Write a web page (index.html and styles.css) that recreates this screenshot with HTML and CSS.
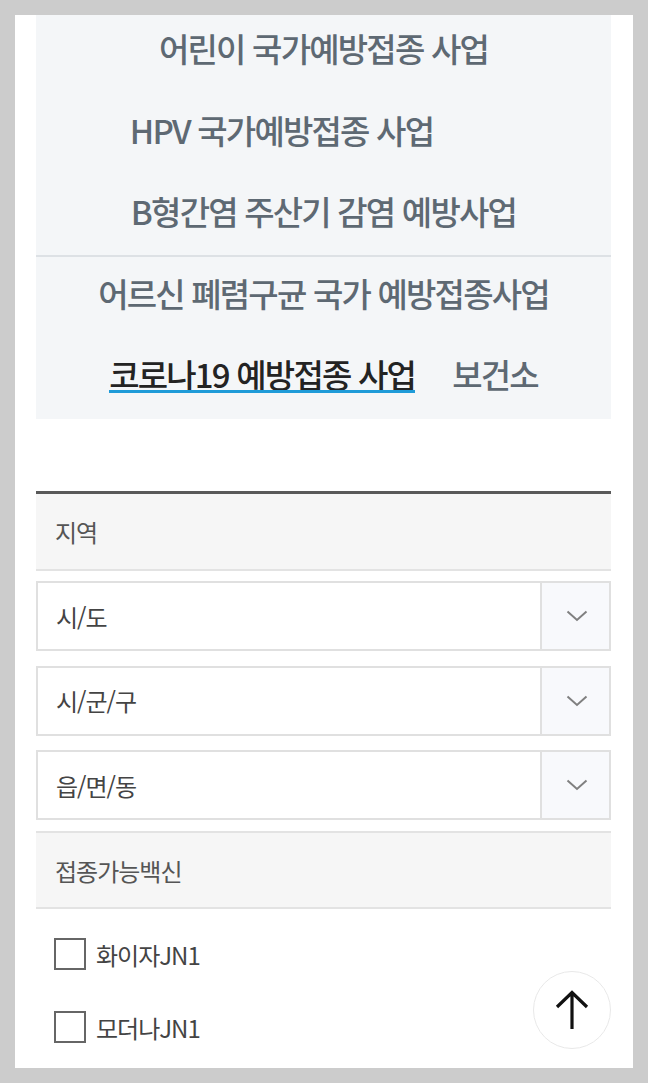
FILE: index.html
```html
<!DOCTYPE html>
<html lang="ko">
<head>
<meta charset="utf-8">
<title>예방접종 사업</title>
<link rel="stylesheet" href="styles.css">
</head>
<body>
<div class="page">
  <nav class="tabs">
    <ul class="tab-group">
      <li class="tab">어린이 국가예방접종 사업</li>
      <li class="tab tab-shift">HPV 국가예방접종 사업</li>
      <li class="tab">B형간염 주산기 감염 예방사업</li>
    </ul>
    <ul class="tab-group tab-group-second">
      <li class="tab">어르신 폐렴구균 국가 예방접종사업</li>
      <li class="tab tab-row">
        <span class="tab-active">코로나19 예방접종 사업</span>
        <span>보건소</span>
      </li>
    </ul>
  </nav>

  <section class="search">
    <div class="field-head field-head-first">지역</div>
    <div class="selects">
      <div class="select">
        <span class="select-label">시/도</span>
        <span class="select-btn"><svg width="22" height="12" viewBox="0 0 22 12"><path d="M1.5 1.5 L11 10 L20.5 1.5" fill="none" stroke="#808080" stroke-width="2"/></svg></span>
      </div>
      <div class="select">
        <span class="select-label">시/군/구</span>
        <span class="select-btn"><svg width="22" height="12" viewBox="0 0 22 12"><path d="M1.5 1.5 L11 10 L20.5 1.5" fill="none" stroke="#808080" stroke-width="2"/></svg></span>
      </div>
      <div class="select">
        <span class="select-label">읍/면/동</span>
        <span class="select-btn"><svg width="22" height="12" viewBox="0 0 22 12"><path d="M1.5 1.5 L11 10 L20.5 1.5" fill="none" stroke="#808080" stroke-width="2"/></svg></span>
      </div>
    </div>
    <div class="field-head field-head-second">접종가능백신</div>
    <ul class="checks">
      <li class="check"><span class="box"></span><span>화이자JN1</span></li>
      <li class="check"><span class="box"></span><span>모더나JN1</span></li>
      <li class="check"><span class="box"></span></li>
    </ul>
  </section>
</div>

<button class="to-top" type="button" aria-label="맨 위로">
  <svg width="40" height="42" viewBox="0 0 40 42"><path d="M20 40 V4 M5 18 L20 3.5 L35 18" fill="none" stroke="#111" stroke-width="3.2"/></svg>
</button>
<div class="frame"></div>
</body>
</html>
```

FILE: styles.css
```css
* { box-sizing: border-box; }
html, body { margin: 0; padding: 0; }
body {
  background: #fff;
  font-family: "Noto Sans CJK KR", "Noto Sans", sans-serif;
  overflow: hidden;
  height: 1083px;
}
ul { list-style: none; margin: 0; padding: 0; }

.page {
  padding: 15px 37px 0 36px;
}

.tabs {
  background: #f4f6f8;
}
.tab-group {
  display: flex;
  flex-direction: column;
  gap: 41.5px;
  padding: 13px 0 24px;
  border-bottom: 2px solid #dde1e5;
}
.tab-group-second {
  border-bottom: 0;
  padding: 16px 0 25px;
  gap: 41px;
}
.tab {
  height: 40px;
  line-height: 40px;
  text-align: center;
  font-size: 33px;
  font-weight: 500;
  letter-spacing: -1.8px;
  color: #5e6973;
  white-space: nowrap;
}
.tab-shift { padding-right: 84px; }
.tab-row {
  display: flex;
  justify-content: center;
  gap: 37px;
}
.tab-active {
  color: #232323;
  position: relative;
}
.tab-active::after {
  content: "";
  position: absolute;
  left: 0;
  right: 0;
  bottom: 1px;
  height: 3px;
  background: #1f9bd8;
}

.search {
  margin-top: 72px;
}
.field-head {
  background: #f6f6f6;
  border-bottom: 2px solid #e3e3e3;
  padding-left: 19px;
  display: flex;
  align-items: center;
  font-size: 24px;
  letter-spacing: -1px;
  color: #555;
}
.field-head-first {
  height: 80px;
  border-top: 3px solid #595959;
  margin-bottom: 10px;
}
.field-head-second {
  height: 78px;
  border-top: 2px solid #e3e3e3;
  margin-top: 11px;
}

.selects {
  display: flex;
  flex-direction: column;
  gap: 14.5px;
}
.select {
  display: flex;
  height: 70px;
  border: 2px solid #e0e0e0;
}
.select-label {
  flex: 1;
  display: flex;
  align-items: center;
  padding-left: 18px;
  font-size: 24px;
  letter-spacing: -1px;
  color: #444;
}
.select-btn {
  width: 69px;
  border-left: 2px solid #e0e0e0;
  background: #f8f9fc;
  display: flex;
  align-items: center;
  justify-content: center;
  padding-left: 3px;
}

.checks {
  padding: 29px 0 0 18px;
  display: flex;
  flex-direction: column;
  gap: 41px;
}
.check {
  display: flex;
  align-items: center;
  gap: 10px;
  height: 32px;
  font-size: 24px;
  letter-spacing: -1px;
  color: #444;
}
.box {
  width: 32px;
  height: 32px;
  border: 2px solid #666;
  background: #fff;
  flex: none;
}

.to-top {
  position: fixed;
  right: 37px;
  bottom: 34px;
  width: 78px;
  height: 78px;
  border-radius: 50%;
  border: 1px solid #e8e8e8;
  background: #fff;
  padding: 0;
  display: flex;
  align-items: center;
  justify-content: center;
}

.frame {
  position: fixed;
  inset: 0;
  border: 15px solid rgba(0, 0, 0, 0.2);
  pointer-events: none;
}
```
